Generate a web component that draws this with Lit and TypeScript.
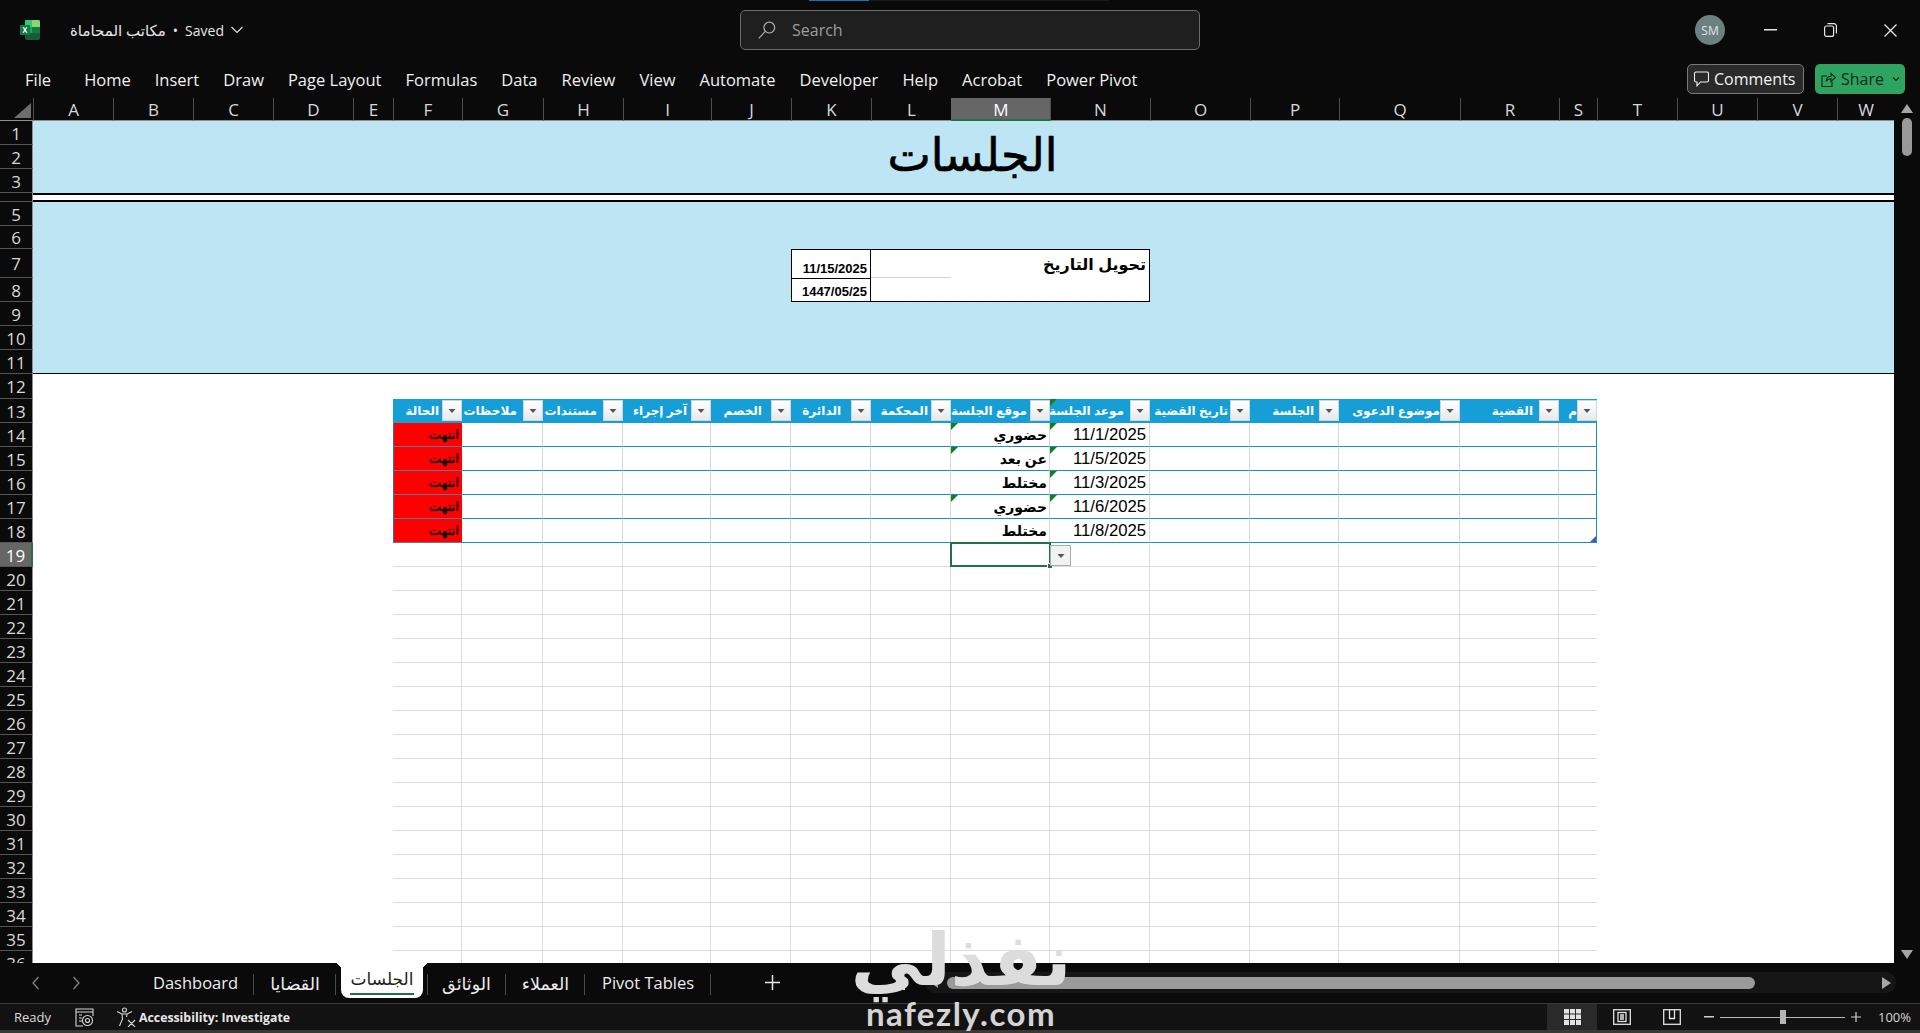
import { LitElement, html, css, svg } from 'lit';
import { customElement } from 'lit/decorators.js';

const uiFont = css`"Open Sans", "Noto Sans", "DejaVu Sans", sans-serif`;
const cellFont = css`"Liberation Sans", "DejaVu Sans", sans-serif`;

const columns = [
  ['A', 80], ['B', 80], ['C', 80], ['D', 80], ['E', 40], ['F', 69], ['G', 81], ['H', 80],
  ['I', 88], ['J', 80], ['K', 80], ['L', 80], ['M', 99], ['N', 100], ['O', 100], ['P', 89],
  ['Q', 121], ['R', 99], ['S', 38], ['T', 80], ['U', 80], ['V', 80], ['W', 57],
] as const;

const rowHeights: Record<number, number> = { 4: 9, 5: 24, 6: 23, 7: 29, 12: 25 };
const rows = Array.from({ length: 36 }, (_, i) => i + 1);
const F = 5;
const S = 18;

// grid tracks: first row/column are the headers
const colLine = (i: number) => i + 2;
const rowLine = (r: number) => r + 1;
const at = (r: number, c: number) => `grid-row:${rowLine(r)};grid-column:${colLine(c)}`;

const heads: [string, number][] = [
  ['الحالة', 3], ['ملاحظات', 6], ['مستندات', 6], ['آخر إجراء', 4], ['الخصم', 9], ['الدائرة', 10],
  ['المحكمة', 3], ['موقع الجلسة', 3], ['موعد الجلسة', 6], ['تاريخ القضية', 2], ['الجلسة', 5],
  ['موضوع الدعوى', 0], ['القضية', 6], ['م', 0],
];

const sessions = [
  { place: 'حضوري', date: '11/1/2025', flagPlace: true, flagDate: true },
  { place: 'عن بعد', date: '11/5/2025', flagPlace: true, flagDate: true },
  { place: 'مختلط', date: '11/3/2025', flagPlace: false, flagDate: true },
  { place: 'حضوري', date: '11/6/2025', flagPlace: true, flagDate: true },
  { place: 'مختلط', date: '11/8/2025', flagPlace: false, flagDate: false },
];

const arrow = svg`<path d="M2.5 4h7L6 8z" fill="#555"/>`;

@customElement('title-bar')
class TitleBar extends LitElement {
  static styles = css`
    :host { display: flex; align-items: center; height: 62px; position: relative; font-family: ${uiFont}; color: #e6e6e6; }
    .logo { margin-left: 20px; width: 20px; height: 20px; margin-top: -2px; }
    .doc { display: flex; align-items: center; margin-left: 30px; gap: 7px; font-size: 14px; width: 670px; margin-top: -2px; }
    .doc .name { font-size: 15px; }
    .search { width: 460px; height: 40px; box-sizing: border-box; display: flex; align-items: center; gap: 16px; padding-left: 17px;
      background: #1f1f1f; border: 1px solid #6b6b6b; border-radius: 5px; color: #9c9c9c; font-size: 16px; margin-top: -3px; }
    .loader { position: absolute; top: 0; left: 809px; width: 300px; height: 1px; background: #1a1a1a; }
    .loader i { display: block; width: 60px; height: 1px; background: #1f6fb5; }
    .right { margin-left: auto; display: flex; align-items: center; margin-top: -2px; }
    .avatar { width: 30px; height: 30px; border-radius: 50%; background: #6e7f82; color: #dfe6e6; font-size: 12px;
      display: flex; align-items: center; justify-content: center; margin-right: 15px; }
    .win { width: 60px; display: flex; justify-content: center; }
    svg { display: block; }
  `;
  render() {
    return html`
      <svg class="logo" viewBox="0 0 20 20">
        <path d="M5 0h13a2 2 0 0 1 2 2v5h-7.500H5z" fill="#33c481"/>
        <path d="M12 0h6a2 2 0 0 1 2 2v8h-8z" fill="#8fd46f"/>
        <path d="M5 7h15v6H5z" fill="#21a366"/>
        <path d="M5 13h15v5a2 2 0 0 1-2 2H7a2 2 0 0 1-2-2z" fill="#185c37"/>
        <path d="M12 7h8v6h-8z" fill="#107c41"/>
        <rect x="0" y="5" width="10" height="10" rx="1" fill="#107c41"/>
        <path d="M2.600 7.200h1.500L5 9l1-1.800h1.400L5.800 10l1.700 2.800H6L5 11l-1 1.800H2.500L4.200 10z" fill="#fff"/>
      </svg>
      <div class="doc">
        <span class="name" dir="rtl">مكاتب المحاماة</span><span>•</span><span>Saved</span>
        <svg width="12" height="8" viewBox="0 0 12 8"><path d="M.5 1l5.500 5.500L11.500 1" fill="none" stroke="#e6e6e6" stroke-width="1.100"/></svg>
      </div>
      <div class="loader"><i></i></div>
      <div class="search">
        <svg width="18" height="18" viewBox="0 0 18 18" fill="none" stroke="#b0b0b0" stroke-width="1.200">
          <circle cx="11.300" cy="6.600" r="5.400"/><path d="M7.300 10.400L.8 17.400"/>
        </svg>
        <span>Search</span>
      </div>
      <div class="right">
        <div class="avatar">SM</div>
        <div class="win"><svg width="13" height="2"><rect width="13" height="1.500" fill="#e6e6e6"/></svg></div>
        <div class="win"><svg width="13" height="14" viewBox="0 0 13 14" fill="none" stroke="#e6e6e6" stroke-width="1.200">
          <rect x=".6" y="3" width="9" height="10.400" rx="2"/><path d="M3.500.7h6.500a2.400 2.400 0 0 1 2.400 2.400v7.500"/></svg></div>
        <div class="win"><svg width="13" height="13" viewBox="0 0 13 13" stroke="#e6e6e6" stroke-width="1.300"><path d="M.5.5l12 12M12.500.5l-12 12"/></svg></div>
      </div>
    `;
  }
}

@customElement('ribbon-bar')
class RibbonBar extends LitElement {
  static styles = css`
    :host { display: flex; align-items: center; height: 36px; font-family: ${uiFont}; font-size: 16.500px; color: #f0f0f0; }
    .tabs { display: flex; gap: 24px; padding: 0 0 2px 25px; }
    .tabs span:first-child { margin-right: 9px; }
    .actions { margin-left: auto; display: flex; gap: 11px; padding-right: 15px; margin-top: -2px; }
    .btn { height: 30px; box-sizing: border-box; border-radius: 5px; display: flex; align-items: center; font-size: 16px; }
    .comments { width: 117px; gap: 5px; padding-left: 6px; background: #2a2a2a; border: 1px solid #7a7a7a; color: #f2f2f2; }
    .share { width: 90px; gap: 5px; padding-left: 6px; background: #2fa360; color: #0e2a1a; }
    .share svg:last-child { margin-left: 3px; }
  `;
  render() {
    const tabs = ['File', 'Home', 'Insert', 'Draw', 'Page Layout', 'Formulas', 'Data', 'Review', 'View', 'Automate', 'Developer', 'Help', 'Acrobat', 'Power Pivot'];
    return html`
      <div class="tabs">${tabs.map((t) => html`<span>${t}</span>`)}</div>
      <div class="actions">
        <div class="btn comments">
          <svg width="15" height="16" viewBox="0 0 15 16" fill="none" stroke="#f2f2f2" stroke-width="1.100"><path d="M2 1h11a1.500 1.500 0 0 1 1.500 1.500v7A1.500 1.500 0 0 1 13 11H6.500L3 14.800V11H2A1.500 1.500 0 0 1 .5 9.500v-7A1.500 1.500 0 0 1 2 1z"/></svg>
          <span>Comments</span>
        </div>
        <div class="btn share">
          <svg width="15" height="16" viewBox="0 0 15 16" fill="none" stroke="#0e2a1a" stroke-width="1.100"><path d="M6 5H1v10.500h10V11M5 10.500C5.500 7 8 5.300 10 5.300V2.500l4.500 4-4.500 4V7.800C8 7.800 6 8.800 5 10.500z"/></svg>
          <span>Share</span>
          <svg width="8" height="6" viewBox="0 0 8 6"><path d="M1 1.500l3 3 3-3" fill="none" stroke="#0e2a1a" stroke-width="1.100"/></svg>
        </div>
      </div>
    `;
  }
}

@customElement('sheet-grid')
class SheetGrid extends LitElement {
  static styles = css`
    :host { display: flex; height: 865px; overflow: hidden; background: #0a0a0a; }
    .grid { display: grid; width: 1894px; height: 865px; overflow: hidden; background: #fff; align-content: start; }
    .corner { grid-row: 1; grid-column: 1; background: #0a0a0a; border-bottom: 1px solid #8e8e8e; display: flex; padding: 5px 0 0 14px; box-sizing: border-box; }
    .ch { background: #0a0a0a; color: #d8d8d8; font: 17px ${uiFont}; display: flex; align-items: center; justify-content: center;
      border-left: 1px solid #4d4d4d; border-bottom: 1px solid #8e8e8e; box-sizing: border-box; padding-top: 1px; }
    .ch.on { background: #666; color: #fff; border-bottom: 2px solid #217346; border-left-color: #666; }
    .rh { grid-column: 1; background: #0a0a0a; color: #d8d8d8; font: 17px/1 ${uiFont}; display: flex; align-items: center; justify-content: center;
      border-bottom: 1px solid #555; border-right: 1px solid #8e8e8e; box-sizing: border-box; overflow: hidden; padding-top: 1px; }
    .rh.on { background: #666; color: #fff; border-right: 2px solid #217346; }
    .banner { background: #bee5f4; grid-column: 2 / -1; }
    .title { display: flex; align-items: center; justify-content: center; font: 46px/1 "Liberation Serif", "DejaVu Sans", serif; color: #000; padding: 0 0 2px 18px; -webkit-text-stroke: 0.7px #000; }
    .rule { grid-column: 2 / -1; background: #fff; border-top: 2px solid #000; border-bottom: 2px solid #000; box-sizing: border-box; }
    .banner.low { border-bottom: 1px solid #000; }
    .d { background: #fff; box-sizing: border-box; font: bold 13px ${cellFont}; color: #000; display: flex; align-items: flex-end; justify-content: flex-end; padding: 0 3px 2px 0; }
    .d.date { border-left: 1px solid #000; border-right: 1px solid #000; }
    .d.top { border-top: 1px solid #000; }
    .d.mid { border-top: 1px solid #000; border-bottom: 1px solid #000; }
    .d.cap { grid-column: 14 / 16; }
    .d.blank { border-top: 1px solid #000; border-bottom: 1px solid #d4d4d4; }
    .d.end { border-bottom: 1px solid #000; }
    .d.wide { border-right: 1px solid #000; border-bottom: 1px solid #000; }
    .d.big { font-size: 16px; align-items: flex-start; padding: 5px 3px 0 0; }
    .hd { background: #169ed7; color: #fff; font: bold 12px ${cellFont}; display: flex; align-items: center; justify-content: flex-end; box-sizing: border-box;
      white-space: nowrap; position: relative; border-bottom: 1px solid #169ed7; }
    .fb { flex: none; width: 20px; height: 21px; box-sizing: border-box; border: 1px solid #cfd6dc; background: linear-gradient(#fff, #e6e8ea); display: flex; align-items: center; justify-content: center; }
    .c { box-sizing: border-box; border-bottom: 1px solid #1b8fba; border-right: 1px solid #d6d6d6; position: relative; background: #fff;
      display: flex; align-items: center; justify-content: flex-end; padding-right: 3px; color: #000; white-space: nowrap; }
    .c.status { background: #f00; font: 13px ${cellFont}; border-left: 1px solid #1e7fa8; border-right: none; border-bottom-color: #4f7fa8; padding-right: 3px; color: #000; text-shadow: 0 0 1px #300; justify-content: flex-start; }
    .c.place { font: bold 14px ${cellFont}; padding-right: 2px; justify-content: flex-start; }
    .c.date { font: 16.700px ${cellFont}; }
    .c.last { border-right: 1px solid #1b8fba; }
    .flag { position: absolute; left: 0; top: 0; width: 0; height: 0; border-top: 7px solid #13801c; border-right: 7px solid transparent; }
    .resize { position: absolute; right: 0; bottom: 0; width: 0; height: 0; border-bottom: 6px solid #3a5fb5; border-left: 6px solid transparent; }
    .g { box-sizing: border-box; border-bottom: 1px solid #dcdcdc; border-right: 1px solid #dcdcdc; }
    .g.last { border-right: none; }
    .sel { position: relative; box-sizing: border-box; border: 2px solid #217346; margin: -1px -1px 0 -1px; background: #fff; z-index: 2; }
    .sel i { position: absolute; right: -4px; bottom: -4px; width: 6px; height: 6px; background: #217346; border: 1px solid #fff; box-sizing: border-box; }
    .dd { position: absolute; left: calc(100% + 1px); top: 1px; width: 21px; height: 21px; box-sizing: border-box; background: #f2f2f2; border: 1px solid #ababab; display: flex; align-items: center; justify-content: center; }
    .vbar { width: 26px; position: relative; display: flex; flex-direction: column; align-items: center; padding: 6px 0 0 0; box-sizing: border-box; }
    .thumb { width: 10px; height: 38px; margin-top: 5px; border-radius: 5px; background: #9a9a9a; }
    .down { margin-top: auto; margin-bottom: 4px; }
    svg { display: block; }
  `;

  filterButton() {
    return html`<span class="fb"><svg width="12" height="12" viewBox="0 0 12 12">${arrow}</svg></span>`;
  }

  render() {
    const tracksX = `33px ${columns.map(([, w]) => `${w}px`).join(' ')}`;
    const tracksY = `23px ${rows.map((r) => `${rowHeights[r] ?? 24}px`).join(' ')}`;
    const k = 10, l = 11, m = 12;
    return html`
      <div class="grid" style="grid-template-columns:${tracksX};grid-template-rows:${tracksY}">
        <div class="corner"><svg width="17" height="15"><path d="M17 0v15H0z" fill="#6d6d6d"/></svg></div>
        ${columns.map(([name], i) => html`<div class="ch ${name === 'M' ? 'on' : ''}" style="grid-row:1;grid-column:${colLine(i)}">${name}</div>`)}
        ${rows.map((r) => html`<div class="rh ${r === 19 ? 'on' : ''}" style="grid-row:${rowLine(r)}">${r === 4 ? '' : r}</div>`)}

        <div class="banner title" dir="rtl" style="grid-row:2 / 5">الجلسات</div>
        <div class="rule" style="grid-row:5"></div>
        <div class="banner low" style="grid-row:6 / 13"></div>

        <div class="d date top" style="${at(7, k)};z-index:1">11/15/2025</div>
        <div class="d blank" style="${at(7, l)};z-index:1"></div>
        <div class="d big cap wide top" style="grid-row:8 / 10;z-index:1"><span dir="rtl">تحويل التاريخ</span></div>
        <div class="d date mid" style="${at(8, k)};z-index:1">1447/05/25</div>
        <div class="d end" style="${at(8, l)};z-index:1"></div>

        ${heads.map(([label, gap], i) => html`
          <div class="hd" style="${at(13, F + i)}">
            <span dir="rtl" style="margin-right:${gap}px">${label}</span>${this.filterButton()}
            ${F + i === m + 1 ? html`<i class="flag"></i>` : ''}
          </div>`)}

        ${sessions.map((row, n) => heads.map((_, i) => {
          const c = F + i;
          const r = 14 + n;
          if (c === F) return html`<div class="c status" dir="rtl" style="${at(r, c)}">انتهت</div>`;
          if (c === m) return html`<div class="c place" dir="rtl" style="${at(r, c)}">${row.flagPlace ? html`<i class="flag"></i>` : ''}${row.place}</div>`;
          if (c === m + 1) return html`<div class="c date" style="${at(r, c)}">${row.flagDate ? html`<i class="flag"></i>` : ''}${row.date}</div>`;
          return html`<div class="c ${c === S ? 'last' : ''}" style="${at(r, c)}">${c === S && n === 4 ? html`<i class="resize"></i>` : ''}</div>`;
        }))}

        ${rows.filter((r) => r >= 19).map((r) => heads.map((_, i) => {
          const c = F + i;
          if (r === 19 && c === m) return html`<div class="sel" style="${at(r, c)}"><i></i><span class="dd"><svg width="12" height="12" viewBox="0 0 12 12">${arrow}</svg></span></div>`;
          return html`<div class="g ${c === S ? 'last' : ''}" style="${at(r, c)}"></div>`;
        }))}
      </div>
      <div class="vbar">
        <svg width="12" height="9"><path d="M6 0l6 9H0z" fill="#a6a6a6"/></svg>
        <div class="thumb"></div>
        <svg class="down" width="12" height="9"><path d="M0 0h12L6 9z" fill="#a6a6a6"/></svg>
      </div>
    `;
  }
}

@customElement('sheet-tabs')
class SheetTabs extends LitElement {
  static styles = css`
    :host { display: flex; height: 40px; background: #0a0a0a; font-family: ${uiFont}; color: #ededed; font-size: 16.500px; position: relative; }
    .nav { width: 137px; display: flex; padding-left: 30px; box-sizing: border-box; gap: 28px; align-items: center; height: 39px; }
    .tabs { display: grid; grid-template-columns: 117px 82px 91px 79px 79px 126px; height: 35px; }
    .tab { display: flex; align-items: center; justify-content: center; position: relative; padding-top: 4px; }
    .tab.ar { font-size: 17.500px; }
    .tab::after { content: ""; position: absolute; right: 0; top: 11px; height: 21px; width: 1px; background: #4a4a4a; }
    .tab.on::after { right: -1px; }
    .tab.on { font-size: 17px; }
    .pill { position: absolute; left: 5px; right: 4px; top: 0; bottom: 0; background: #fff; border-radius: 0 0 8px 8px; color: #222; display: flex; align-items: center; justify-content: center; padding-top: 0; }
    .pill::before, .pill::after { content: ""; position: absolute; top: 0; width: 7px; height: 7px; }
    .pill::before { left: -7px; background: radial-gradient(circle at 0 100%, transparent 7px, #fff 7px); }
    .pill::after { right: -7px; background: radial-gradient(circle at 100% 100%, transparent 7px, #fff 7px); }
    .pill span { border-bottom: 2px solid #217346; padding: 0 1px 1px; line-height: 26px; }
    .plus { margin-left: 54px; height: 39px; display: flex; align-items: center; }
    .scroll { position: absolute; left: 925px; right: 24px; top: 9px; height: 21px; border-radius: 10px; background: #161616; display: flex; align-items: center; }
    .scroll b { display: block; height: 12px; margin-left: 22px; width: 808px; border-radius: 6px; background: #9a9a9a; }
    .scroll svg { margin-left: 2px; }
    .scroll .r { margin-left: auto; margin-right: 5px; }
    .scroll .l { position: absolute; left: 4px; }
    .dots { position: absolute; left: 903px; top: 17px; width: 2px; height: 10px; background: repeating-linear-gradient(#ddd 0 2px, transparent 2px 4px); }
    svg { display: block; }
  `;
  render() {
    return html`
      <div class="nav">
        <svg width="12" height="16" viewBox="0 0 12 16" fill="none" stroke="#8a8a8a" stroke-width="1.200"><path d="M8.500 2L3 8l5.500 6"/></svg>
        <svg width="12" height="16" viewBox="0 0 12 16" fill="none" stroke="#8a8a8a" stroke-width="1.200"><path d="M3.500 2L9 8l-5.500 6"/></svg>
      </div>
      <div class="tabs">
        <div class="tab">Dashboard</div>
        <div class="tab ar" dir="rtl">القضايا</div>
        <div class="tab ar on"><div class="pill"><span dir="rtl">الجلسات</span></div></div>
        <div class="tab ar" dir="rtl">الوثائق</div>
        <div class="tab ar" dir="rtl">العملاء</div>
        <div class="tab">Pivot Tables</div>
      </div>
      <div class="plus"><svg width="15" height="15" stroke="#e6e6e6" stroke-width="1.500"><path d="M7.500 0v15M0 7.500h15"/></svg></div>
      <div class="dots"></div>
      <div class="scroll">
        <svg class="l" width="7" height="10"><path d="M7 0v10L0 5z" fill="#a6a6a6"/></svg>
        <b></b>
        <svg class="r" width="9" height="12"><path d="M0 0l9 6-9 6z" fill="#a6a6a6"/></svg>
      </div>
    `;
  }
}

@customElement('status-bar')
class StatusBar extends LitElement {
  static styles = css`
    :host { display: flex; align-items: center; height: 30px; box-sizing: border-box; background: #121212; border-top: 1px solid #3a3a3a; border-bottom: 3px solid #3b3931;
      font-family: ${uiFont}; font-size: 13px; color: #dcdcdc; }
    .ready { margin-left: 14px; width: 61px; }
    .macro { width: 41px; }
    .a11y { display: flex; align-items: center; gap: 3px; font-weight: 700; color: #e8e8e8; font-size: 12.300px; }
    .right { margin-left: auto; display: flex; align-items: center; height: 100%; }
    .view { width: 50px; height: 100%; display: flex; align-items: center; justify-content: center; }
    .view.on { background: #2a2a2a; }
    .zoom { display: flex; align-items: center; margin-left: 7px; }
    .track { width: 125px; height: 1px; background: #b8b8b8; margin: 0 6px; position: relative; }
    .track i { position: absolute; left: 60px; top: -7px; width: 6px; height: 14px; background: #b4b4b4; }
    .pct { margin-left: 17px; width: 42px; color: #d4d4d4; }
    svg { display: block; }
  `;
  render() {
    return html`
      <span class="ready">Ready</span>
      <span class="macro">
        <svg width="19" height="19" viewBox="0 0 19 19" fill="none" stroke="#d6d6d6" stroke-width="1.100">
          <path d="M1 1h17v3H1zM1 4v14h7M18 4v4"/><circle cx="12.500" cy="12.500" r="5"/><circle cx="12.500" cy="12.500" r="2"/>
          <path d="M4 7h3M4 10h3M4 13h3"/>
        </svg>
      </span>
      <span class="a11y">
        <svg width="20" height="20" viewBox="0 0 20 20" fill="none" stroke="#d6d6d6" stroke-width="1.100">
          <circle cx="8.500" cy="3" r="2"/><path d="M1 4.500l5 2.500h5l5-2.500M6 7l.5 5L3.500 19M11 7l-.5 3M12 13l7 7M19 13l-7 7"/>
        </svg>
        <span>Accessibility: Investigate</span>
      </span>
      <div class="right">
        <div class="view on"><svg width="17" height="16" viewBox="0 0 17 16" fill="#e2e2e2"><path d="M0 0h5v4.500H0zM6 0h5v4.500H6zM12 0h5v4.500h-5zM0 5.500h5V10H0zM6 5.500h5V10H6zM12 5.500h5V10h-5zM0 11h5v5H0zM6 11h5v5H6zM12 11h5v5h-5z"/></svg></div>
        <div class="view"><svg width="18" height="16" viewBox="0 0 18 16" fill="none" stroke="#e2e2e2" stroke-width="1.300"><rect x=".7" y=".7" width="16.600" height="14.600"/><rect x="5" y="3.500" width="8" height="9"/><path d="M7 6h4M7 8h4M7 10h4"/></svg></div>
        <div class="view"><svg width="18" height="16" viewBox="0 0 18 16" fill="none" stroke="#e2e2e2" stroke-width="1.300"><rect x=".7" y=".7" width="16.600" height="14.600"/><path d="M6.500 1v8.500h5V1"/></svg></div>
        <div class="zoom">
          <svg width="10" height="2"><rect width="10" height="1.500" fill="#d0d0d0"/></svg>
          <div class="track"><i></i></div>
          <svg width="10" height="10" stroke="#d0d0d0" stroke-width="1.200"><path d="M5 0v10M0 5h10"/></svg>
        </div>
        <span class="pct">100%</span>
      </div>
    `;
  }
}

@customElement('app-root')
export class AppRoot extends LitElement {
  static styles = css`
    :host { display: block; position: relative; width: 1920px; height: 1033px; overflow: hidden; background: #0a0a0a; }
    .mark { position: absolute; left: 855px; top: 920px; width: 212px; display: flex; flex-direction: column; align-items: center; color: #dcdcdc; pointer-events: none; }
    .ar { font: 700 72px/80px "DejaVu Sans", sans-serif; height: 80px; }
    .en { font: 700 33px/30px "Lato", "Open Sans", sans-serif; letter-spacing: 1.500px; margin-top: -2px; color: #d4d4d4; }
  `;
  render() {
    return html`
      <title-bar></title-bar>
      <ribbon-bar></ribbon-bar>
      <sheet-grid></sheet-grid>
      <sheet-tabs></sheet-tabs>
      <status-bar></status-bar>
      <div class="mark"><span class="ar" dir="rtl">نفذلي</span><span class="en">nafezly.com</span></div>
    `;
  }
}
